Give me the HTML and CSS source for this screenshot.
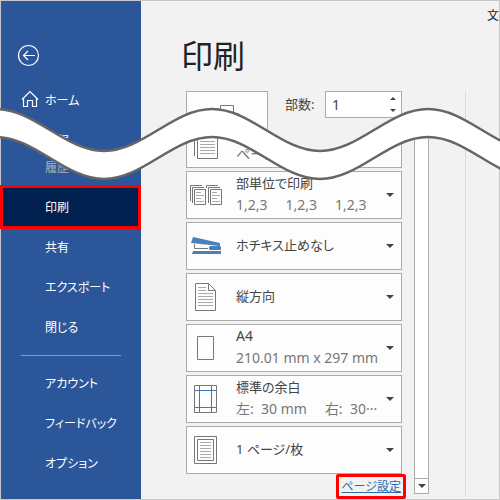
FILE: index.html
```
<!DOCTYPE html>
<html lang="ja">

<head>
    <meta charset="UTF-8">
    <meta name="viewport" content="width=device-width, initial-scale=1.0">
    <link rel="stylesheet" href="styles.css">
    <title>印刷</title>
</head>

<body>

    <div class="window">
        <nav class="sidebar">
            <button class="back" type="button" aria-label="戻る">
                <svg width="22" height="22" viewBox="0 0 22 22">
                    <circle cx="11.500" cy="11.500" r="10" />
                    <path d="M18 11.500H6.500M11 7l-4.500 4.500L11 16" />
                </svg>
            </button>
            <ul class="menu">
                <li>
                    <a href="#" class="home">
                        <svg width="18" height="18" viewBox="0 0 18 18">
                            <path d="M1 9.500L9 1.500l8 8M2.500 8.500v8h4v-6h5v6h4v-8" />
                        </svg>
                        ホーム
                    </a>
                </li>
                <li><a href="#">情報</a></li>
                <li class="history"><a href="#">履歴</a></li>
                <li class="active"><a href="#">印刷</a></li>
                <li><a href="#">共有</a></li>
                <li><a href="#">エクスポート</a></li>
                <li><a href="#">閉じる</a></li>
            </ul>
            <ul class="menu menuSub">
                <li><a href="#">アカウント</a></li>
                <li><a href="#">フィードバック</a></li>
                <li><a href="#">オプション</a></li>
            </ul>
        </nav>

        <main class="main">
            <div class="docName">文</div>
            <h1>印刷</h1>
            <div class="content">
                <div class="settings">
                    <div class="printRow">
                        <button class="printBtn" type="button" aria-label="印刷">
                            <svg width="32" height="28" viewBox="0 0 32 28">
                                <path d="M9.500 10V.5h13V10M4.500 8.500h23v12h-23zM9.500 15.500h13v10h-13z" />
                            </svg>
                        </button>
                        <label for="copies">部数:</label>
                        <div class="spin">
                            <input id="copies" type="text" inputmode="numeric" value="1">
                            <div class="spinBtns">
                                <button type="button" class="up" aria-label="増やす"></button>
                                <button type="button" class="down" aria-label="減らす"></button>
                            </div>
                        </div>
                    </div>

                    <button class="option cut" type="button">
                        <svg class="icon" viewBox="0 0 49 46">
                            <path class="line" d="M7.500 35V12.500h18M10.500 12.500h20v25h-20z" />
                            <path class="text" d="M13 17.500h6M13 20.500h15M13 23.500h15M13 26.500h15M13 29.500h15M13 32.500h15" />
                        </svg>
                        <span class="label"><span>&nbsp;</span><span class="sub">ページ</span></span>
                    </button>
                    <button class="option" type="button">
                        <svg class="icon" viewBox="0 0 49 46">
                            <path class="line" d="M3.500 29V13.500H15M5.500 31V15.500H17M7.500 17.500h11v15h-11zM19.500 16v-2.500H31M21.500 31V15.500H33M23.500 17.500h11v15h-11z" />
                            <path class="text" d="M9 20.500h5M9 23.500h8M9 26.500h5M9 29.500h8M25 20.500h5M25 23.500h8M25 26.500h5M25 29.500h8" />
                        </svg>
                        <span class="label">
                            <span>部単位で印刷</span>
                            <span class="sub sets"><span>1,2,3</span><span>1,2,3</span><span>1,2,3</span></span>
                        </span>
                    </button>
                    <button class="option" type="button">
                        <svg class="icon" viewBox="0 0 49 46">
                            <path class="line" d="M7.500 21v4.500H21" />
                            <path class="fill" d="M6 14l27 6v3L4 20zM23 23h10l1 1v3H23l-1-1v-2zM6 28h28v3H5z" />
                        </svg>
                        <span class="label"><span>ホチキス止めなし</span></span>
                    </button>
                    <button class="option" type="button">
                        <svg class="icon" viewBox="0 0 49 46">
                            <path class="line" d="M8.500 9.500h13l7 7v20h-20zM21.500 9.500v7h7" />
                            <path class="text" d="M11 13.500h8M11 16.500h8M11 19.500h15M11 22.500h15M11 25.500h15M11 28.500h15M11 31.500h15" />
                        </svg>
                        <span class="label"><span>縦方向</span></span>
                    </button>
                    <button class="option" type="button">
                        <svg class="icon" viewBox="0 0 49 46">
                            <path class="line" d="M10.500 11.500h16v23h-16z" />
                        </svg>
                        <span class="label"><span class="latin">A4</span><span class="sub">210.01 mm x 297 mm</span></span>
                    </button>
                    <button class="option" type="button">
                        <svg class="icon" viewBox="0 0 49 46">
                            <path class="line" d="M7.500 9.500h22v27h-22z" />
                            <path class="guide" d="M12.500 10v26M24.500 10v26M8 14.500h21M8 31.500h21" />
                        </svg>
                        <span class="label">
                            <span>標準の余白</span>
                            <span class="sub margins"><span>左:&nbsp; 30 mm</span><span>右:&nbsp; 30···</span></span>
                        </span>
                    </button>
                    <button class="option" type="button">
                        <svg class="icon" viewBox="0 0 49 46">
                            <path class="line" d="M7.500 9.500h22v27h-22zM10.500 12.500h16v21h-16z" />
                            <path class="text" d="M13 15.500h11M13 18.500h11M13 21.500h11M13 24.500h11M13 27.500h11M13 30.500h11" />
                        </svg>
                        <span class="label"><span>1 ページ/枚</span></span>
                    </button>
                    <a href="#" class="pageSetup">ページ設定</a>
                </div>

                <div class="scrollbar">
                    <button type="button" class="down" aria-label="下へスクロール"></button>
                </div>
                <div class="preview"></div>
            </div>
        </main>

        <!-- torn strip: the part of the window between its edges is left out -->
        <svg class="wave" viewBox="0 0 500 80">
            <path class="band" d="M-4 5C35 5 65 47 104 47S173 5 212 5S281 47 320 47S389 5 428 5S497 47 536 47V75C497 75 467 33 428 33S359 75 320 75S251 33 212 33S143 75 104 75S35 33 -4 33z" />
        </svg>
    </div>

</body>

</html>
```
FILE: styles.css
```
* {
    margin: 0;
    padding: 0;
    box-sizing: border-box;
    list-style: none;
}

body {
    font-family: "Noto Sans", "Noto Sans CJK JP", sans-serif;
    font-size: 13px;
    font-feature-settings: "palt";
    color: #444;
}

button,
input {
    font: inherit;
    font-feature-settings: inherit;
    color: inherit;
}

a {
    color: inherit;
    text-decoration: none;
}

svg {
    fill: none;
}

.window {
    position: relative;
    display: flex;
    min-height: 100vh;
    border: 1px solid #c6c6c6;
    background-color: #f2f2f2;
}

/* sidebar */
.sidebar {
    width: 140px;
    flex-shrink: 0;
    padding-top: 43px;
    background-color: #2b579a;
    color: #fff;
    font-family: "Noto Sans CJK JP", sans-serif;
    font-size: 12px;
}

.sidebar svg {
    overflow: visible;
    stroke: #fff;
    stroke-width: 1.2;
}

.back {
    display: block;
    height: 22px;
    margin: 0 0 13px 16px;
    border: none;
    background: none;
}

.menu a {
    display: flex;
    align-items: center;
    height: 40px;
    padding-left: 44px;
}

.menu .home {
    gap: 6px;
    padding-left: 20px;
}

.menu .history {
    color: #b3b3b3;
}

.menu .history a {
    height: 27px;
    padding-bottom: 12px;
}

.menu .active a {
    height: 44px;
    margin: -1px 0 -3px -1px;
    padding: 0 0 2px 42px;
    border: 3px solid #f00;
    background-color: #002050;
}

.menuSub {
    padding-top: 9px;
}

.menuSub::before {
    content: "";
    display: block;
    margin: 0 20px 6px;
    border-top: 1px solid #7f9fd0;
}

/* main */
.main {
    flex: 1;
    min-width: 0;
}

.docName {
    height: 26px;
    padding-top: 6px;
    font-size: 12px;
    line-height: 18px;
    text-align: right;
    color: #222;
}

h1 {
    height: 64px;
    padding-left: 40px;
    font-family: "Noto Sans CJK JP", sans-serif;
    font-size: 32px;
    font-weight: normal;
    line-height: 54px;
    color: #222;
}

.content {
    display: grid;
    grid-template-columns: 1fr 15px 70px;
    padding-left: 45px;
}

.settings {
    display: flex;
    flex-direction: column;
    gap: 3px;
    margin-right: 12px;
}

.printRow {
    display: flex;
    align-items: flex-start;
    height: 26px;
    line-height: 26px;
}

.printBtn {
    width: 82px;
    height: 42px;
    margin-right: 17px;
    border: 1px solid #ababab;
    background-color: #fdfdfd;
}

.printBtn svg {
    display: block;
    margin: 13px auto 0;
    stroke: #777;
}

.spin {
    display: flex;
    width: 77px;
    height: 27px;
    margin-left: auto;
    border: 1px solid #ababab;
    background-color: #fff;
}

.spin input {
    flex: 1;
    min-width: 0;
    padding-left: 6px;
    border: none;
    background: none;
    font-size: 14px;
}

.spinBtns {
    display: flex;
    flex-direction: column;
    width: 16px;
}

.spinBtns button {
    flex: 1;
}

.up,
.down {
    display: flex;
    align-items: center;
    justify-content: center;
    border: none;
    background: none;
}

.up::before,
.down::before,
.option::after {
    content: "";
    border: 3px solid transparent;
    border-top: 3px solid #444;
    border-bottom: none;
}

.up::before {
    border-top: none;
    border-bottom: 3px solid #444;
}

.option {
    display: flex;
    align-items: center;
    height: 48px;
    padding-right: 7px;
    border: 1px solid #ababab;
    background-color: #fdfdfd;
    line-height: 22px;
    text-align: left;
}

.option::after,
.scrollbar .down::before {
    border-width: 4px 4px 0;
}

/* only the part below the torn strip shows */
.cut {
    clip-path: polygon(0 9px, 12% 2px, 38% 24px, 62% 44px, 86% 25px, 100% 8px, 100% 100%, 0 100%);
}

.icon {
    width: 49px;
    height: 46px;
    flex-shrink: 0;
}

.icon .line {
    stroke: #777;
}

.icon .text {
    stroke: #aaa;
}

.icon .guide {
    stroke: #3f78b5;
}

.icon .fill {
    fill: #4a7fba;
}

.label {
    display: flex;
    flex-direction: column;
    flex: 1;
    padding-bottom: 2px;
    white-space: nowrap;
}

.latin,
.sub {
    font-size: 14px;
}

.sub {
    color: #777;
}

.sets,
.margins {
    display: flex;
    gap: 18px;
}

.pageSetup {
    align-self: flex-end;
    height: 25px;
    margin: -3px -4px 0 0;
    padding: 0 2px;
    border: 3px solid #f00;
    border-radius: 2px;
    font-size: 12px;
    line-height: 19px;
    color: #2b6cab;
    text-decoration: underline;
}

.scrollbar {
    display: flex;
    align-items: flex-end;
    margin: 36px 0 5px;
    border: 1px solid #ababab;
    background-color: #fff;
}

.scrollbar .down {
    width: 100%;
    height: 15px;
    border-top: 1px solid #ababab;
    background-color: #fdfdfd;
}

.preview {
    margin: 0 0 2px 36px;
    border-left: 1px solid #dcdcdc;
}

.wave {
    position: absolute;
    top: 103px;
    left: -1px;
    width: calc(100% + 2px);
    pointer-events: none;
}

.band {
    fill: #fff;
    stroke: #666;
    stroke-width: 2.5;
}
```
